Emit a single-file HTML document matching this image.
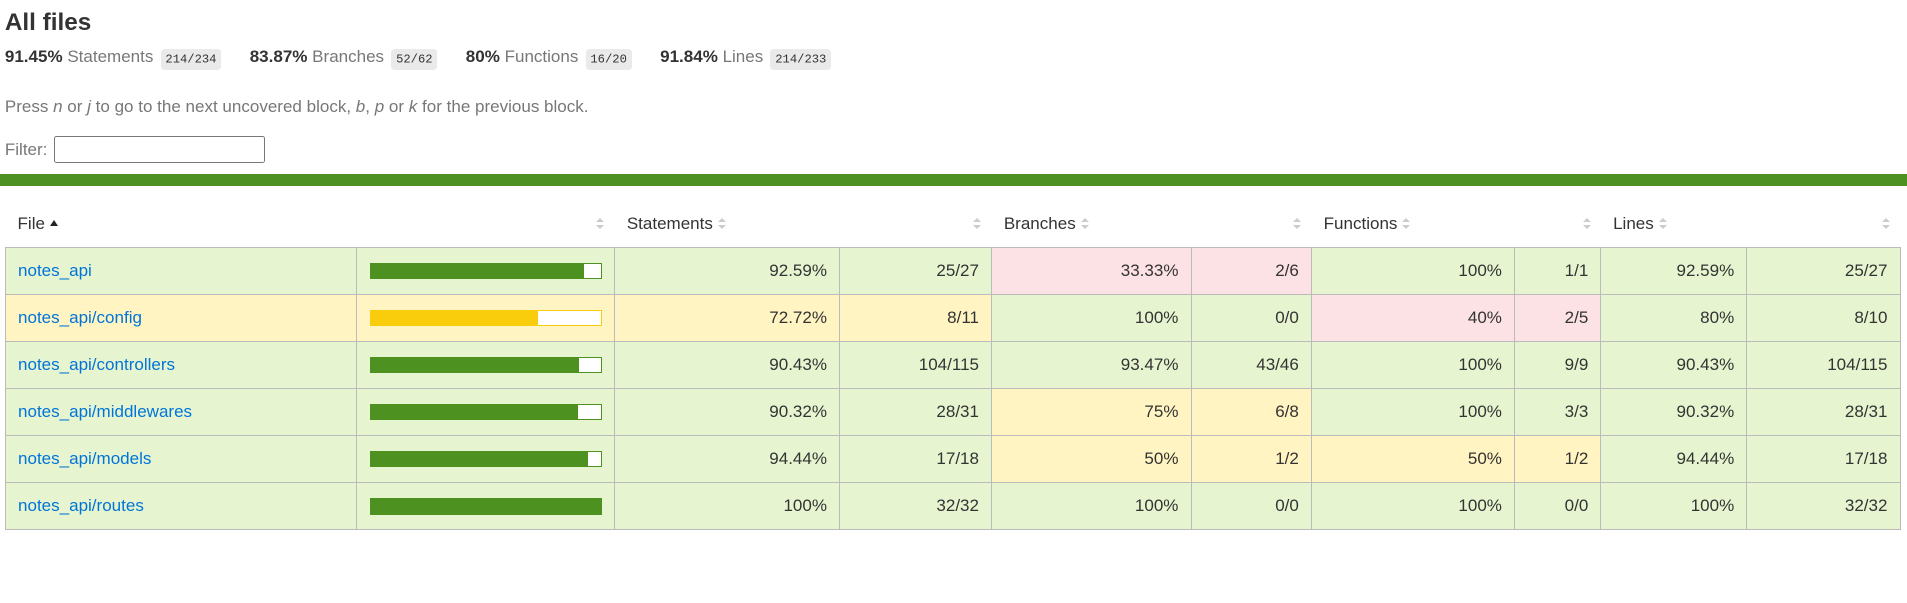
<!DOCTYPE html>
<html><head><meta charset="utf-8"><style>
html,body{margin:0;padding:0;background:#fff;}
body{zoom:1.2162;width:1568px;height:496px;overflow:hidden;font-family:"Liberation Sans",Arial,sans-serif;font-size:14px;color:#333;position:relative}
.a{position:absolute;white-space:nowrap}
h1{position:absolute;left:4px;top:7px;margin:0;font-size:20px;font-weight:bold;color:#333}
.st b{font-weight:bold;color:#333}
.st span.q{color:#777}
.badge{font-family:"Liberation Mono",monospace;font-size:10px;background:#eaeaea;border-radius:3px;padding:3px 4px;color:#333;margin-left:2px}
.quiet{color:#777}
input{position:absolute;left:44px;top:112px;width:174px;height:22px;box-sizing:border-box;border:1px solid #777;border-radius:2px;margin:0;padding:0}
.bar{position:absolute;left:0;top:143px;width:1568px;height:10px;background:#4d9221}
table{position:absolute;left:4px;top:165px;border-collapse:collapse;width:1558px;table-layout:fixed}
th{font-weight:normal;text-align:left;height:38px;padding:0 0 0 10px;position:relative;color:#333}
td{border:1px solid #bbb;height:38.7px;padding:0 10px;text-align:right;box-sizing:border-box}
td.f{text-align:left}
td a{color:#0074d9;text-decoration:none}
.h{background:#e6f5d0}.m{background:#fff4c2}.l{background:#fce1e5}
.sort{display:inline-block;width:7px;height:11px;vertical-align:middle;margin-left:4px;position:relative}
.sort:before,.sort:after{content:"";position:absolute;left:0;border-left:3.5px solid transparent;border-right:3.5px solid transparent}
.sort:before{top:0;border-bottom:4px solid #ccc}
.sort:after{top:6px;border-top:4px solid #ccc}
.th-r{position:absolute;right:8px;top:14px}
.up{display:inline-block;border-left:4px solid transparent;border-right:4px solid transparent;border-bottom:5px solid #222;vertical-align:middle;margin-left:4px;margin-top:-2px}
.pb{width:189px;height:12px;border:1px solid #4d9221;margin:0 auto;background:#fff;position:relative;left:0}
.pb i{display:block;height:12px;background:#4d9221}
.pb.y{border-color:#f9cd0b}.pb.y i{background:#f9cd0b}
td.p{padding:0}
</style></head><body>
<h1>All files</h1>
<div class="a st" style="left:4px;top:39px"><b>91.45%</b> <span class="q">Statements</span> <span class="badge">214/234</span>&nbsp;&nbsp;&nbsp;&nbsp;&nbsp;&nbsp;<b>83.87%</b> <span class="q">Branches</span> <span class="badge">52/62</span>&nbsp;&nbsp;&nbsp;&nbsp;&nbsp;&nbsp;<b>80%</b> <span class="q">Functions</span> <span class="badge">16/20</span>&nbsp;&nbsp;&nbsp;&nbsp;&nbsp;&nbsp;<b>91.84%</b> <span class="q">Lines</span> <span class="badge">214/233</span></div>
<div class="a quiet" style="left:4px;top:80px">Press <i>n</i> or <i>j</i> to go to the next uncovered block, <i>b</i>, <i>p</i> or <i>k</i> for the previous block.</div>
<div class="a quiet" style="left:4px;top:115px">Filter:</div>
<input type="text">
<div class="bar"></div>
<table>
<colgroup><col style="width:289px"><col style="width:212px"><col style="width:185px"><col style="width:125px"><col style="width:164px"><col style="width:99px"><col style="width:167px"><col style="width:71px"><col style="width:120px"><col style="width:126px"></colgroup>
<tr><th>File<span class="up"></span></th><th><span class="th-r sort"></span></th><th>Statements<span class="sort"></span></th><th><span class="th-r sort"></span></th><th>Branches<span class="sort"></span></th><th><span class="th-r sort"></span></th><th>Functions<span class="sort"></span></th><th><span class="th-r sort"></span></th><th>Lines<span class="sort"></span></th><th><span class="th-r sort"></span></th></tr>
<tr><td class="f h"><a>notes_api</a></td><td class="p h"><div class="pb"><i style="width:92.59%"></i></div></td><td class="h">92.59%</td><td class="h">25/27</td><td class="l">33.33%</td><td class="l">2/6</td><td class="h">100%</td><td class="h">1/1</td><td class="h">92.59%</td><td class="h">25/27</td></tr>
<tr><td class="f m"><a>notes_api/config</a></td><td class="p m"><div class="pb y"><i style="width:72.72%"></i></div></td><td class="m">72.72%</td><td class="m">8/11</td><td class="h">100%</td><td class="h">0/0</td><td class="l">40%</td><td class="l">2/5</td><td class="h">80%</td><td class="h">8/10</td></tr>
<tr><td class="f h"><a>notes_api/controllers</a></td><td class="p h"><div class="pb"><i style="width:90.43%"></i></div></td><td class="h">90.43%</td><td class="h">104/115</td><td class="h">93.47%</td><td class="h">43/46</td><td class="h">100%</td><td class="h">9/9</td><td class="h">90.43%</td><td class="h">104/115</td></tr>
<tr><td class="f h"><a>notes_api/middlewares</a></td><td class="p h"><div class="pb"><i style="width:90.32%"></i></div></td><td class="h">90.32%</td><td class="h">28/31</td><td class="m">75%</td><td class="m">6/8</td><td class="h">100%</td><td class="h">3/3</td><td class="h">90.32%</td><td class="h">28/31</td></tr>
<tr><td class="f h"><a>notes_api/models</a></td><td class="p h"><div class="pb"><i style="width:94.44%"></i></div></td><td class="h">94.44%</td><td class="h">17/18</td><td class="m">50%</td><td class="m">1/2</td><td class="m">50%</td><td class="m">1/2</td><td class="h">94.44%</td><td class="h">17/18</td></tr>
<tr><td class="f h"><a>notes_api/routes</a></td><td class="p h"><div class="pb"><i style="width:100%"></i></div></td><td class="h">100%</td><td class="h">32/32</td><td class="h">100%</td><td class="h">0/0</td><td class="h">100%</td><td class="h">0/0</td><td class="h">100%</td><td class="h">32/32</td></tr>
</table>
</body></html>
